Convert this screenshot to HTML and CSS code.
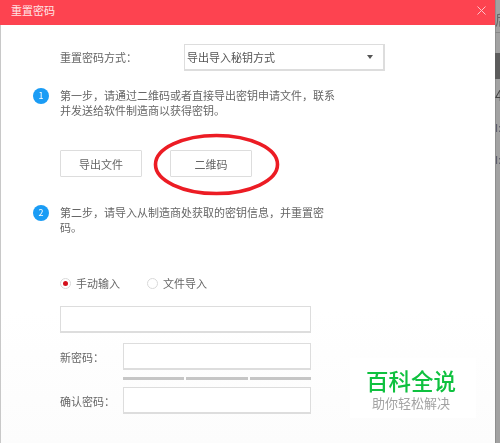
FILE: index.html
```html
<!DOCTYPE html>
<html lang="zh">
<head>
<meta charset="utf-8">
<title>重置密码</title>
<link rel="stylesheet" href="styles.css">
</head>
<body>
<div class="page">
  <main class="dialog">
    <header class="head">
      <span class="head-title">重置密码</span>
      <svg class="close" width="9" height="9" viewBox="0 0 9 9"><path d="M.5.5l8 8M8.5.5l-8 8" stroke="#fbc4c9" stroke-width="1" fill="none"/></svg>
    </header>
    <div class="body">
      <div class="method">
        <span class="method-label">重置密码方式：</span>
        <div class="select">
          <span>导出导入秘钥方式</span>
          <span class="caret"></span>
        </div>
      </div>
      <div class="step step-one">
        <span class="badge">1</span>
        <p class="step-text">第一步，请通过二维码或者直接导出密钥申请文件，联系并发送给软件制造商以获得密钥。</p>
      </div>
      <div class="buttons">
        <button class="btn">导出文件</button>
        <button class="btn">二维码</button>
      </div>
      <div class="step step-two">
        <span class="badge">2</span>
        <p class="step-text">第二步，请导入从制造商处获取的密钥信息，并重置密码。</p>
      </div>
      <div class="radios">
        <label class="radio"><span class="dot dot-on"></span>手动输入</label>
        <label class="radio"><span class="dot"></span>文件导入</label>
      </div>
      <div class="box box-full"></div>
      <div class="row row-new">
        <span class="row-label">新密码：</span>
        <div class="box box-field"></div>
      </div>
      <div class="meter"><i></i><i></i><i></i></div>
      <div class="row row-confirm">
        <span class="row-label">确认密码：</span>
        <div class="box box-field"></div>
      </div>
    </div>
  </main>
  <aside class="behind">
    <span class="behind-top">后</span>
    <span class="behind-dark"></span>
    <span class="behind-num">4</span>
    <span class="behind-id">I:</span>
    <span class="behind-id">I:</span>
  </aside>
</div>
<svg class="circle" width="133" height="69" viewBox="0 0 133 69"><ellipse cx="66.5" cy="34.5" rx="61" ry="29" fill="none" stroke="#ec1c24" stroke-width="3.6"/></svg>
<div class="mark">
  <div class="mark-name">百科全说</div>
  <div class="mark-sub">助你轻松解决</div>
</div>
</body>
</html>
```
FILE: styles.css
```css
* { box-sizing: border-box; }
html, body { margin: 0; padding: 0; }
body {
  width: 500px;
  height: 443px;
  overflow: hidden;
  position: relative;
  font-family: "Noto Sans CJK SC", "Noto Sans", sans-serif;
  font-size: 11px;
  color: #666;
  background: #fff;
}
.page { display: flex; height: 443px; filter: blur(.35px); }
.dialog {
  width: 495px;
  height: 443px;
  display: flex;
  flex-direction: column;
  background: linear-gradient(#fff 70%, #fcfcfc);
}
.head {
  height: 25px;
  flex: none;
  background: #fd4350;
  display: flex;
  align-items: center;
  justify-content: space-between;
  padding: 0 9px 5px 11px;
  color: #ffe4e6;
  font-size: 11px;
}
.close { display: block; }
.body {
  flex: 1;
  border-left: 1px solid #c8c8c8;
  padding: 19px 0 0 59px;
  display: flex;
  flex-direction: column;
  align-items: flex-start;
}
.method { display: flex; align-items: center; height: 27px; }
.method-label { width: 124px; margin-bottom: 2px; font-family: "Noto Sans CJK TC", "Noto Sans CJK SC", sans-serif; }
.select {
  width: 201px;
  height: 27px;
  border: 1px solid #ddd;
  border-width: 1px 2px 2px 1px;
  display: flex;
  align-items: center;
  justify-content: space-between;
  padding: 0 10px 1px 2px;
  color: #555;
}
.caret {
  width: 0;
  height: 0;
  border: 3px solid transparent;
  border-top: 4px solid #555;
  border-bottom: 0;
}
.step { position: relative; width: 276px; }
.step-one { margin-top: 17px; }
.step-two { margin-top: 28px; }
.step-text { margin: 0; line-height: 15px; letter-spacing: 0; }
.badge {
  position: absolute;
  left: -27px;
  top: 0;
  width: 16px;
  height: 16px;
  border-radius: 50%;
  background: #1a9cf5;
  color: #fff;
  font-size: 9px;
  line-height: 16px;
  text-align: center;
}
.buttons { display: flex; gap: 28px; margin-top: 32px; }
.btn {
  width: 82px;
  height: 27px;
  padding: 0;
  background: #fff;
  border: 1px solid #ddd;
  border-radius: 1px;
  font: inherit;
  color: #666;
}
.radios { display: flex; gap: 27px; margin-top: 40px; height: 16px; }
.radio { display: flex; align-items: center; gap: 5px; }
.dot {
  width: 11px;
  height: 11px;
  border: 1px solid #d8d8d8;
  border-radius: 50%;
  display: flex;
  align-items: center;
  justify-content: center;
}
.dot-on::after {
  content: "";
  width: 5px;
  height: 5px;
  border-radius: 50%;
  background: #d4101c;
}
.box { border: 1px solid #ddd; border-width: 1px 1px 2px 1px; height: 27px; background: #fff; }
.box-full { width: 251px; margin-top: 15px; }
.row { display: flex; align-items: center; }
.row-new { margin-top: 10px; }
.row-confirm { margin-top: 7px; }
.row-label { width: 63px; font-family: "Noto Sans CJK TC", "Noto Sans CJK SC", sans-serif; }
.box-field { width: 188px; }
.meter { display: flex; gap: 2px; width: 188px; margin: 7px 0 0 63px; }
.meter i { flex: 1; height: 3px; background: #c6c6c6; }
.behind {
  flex: 1;
  height: 443px;
  overflow: hidden;
  background: linear-gradient(90deg, #8e8e8e 1px, #a2a2a2 1px);
  display: flex;
  flex-direction: column;
  color: #444;
  font-size: 14px;
  line-height: 16px;
  white-space: nowrap;
}
.behind-top { height: 33px; padding-top: 11px; border-bottom: 1px solid #888; color: #666; }
.behind-dark { height: 26px; margin-top: 20px; background: #5c5c5c; flex: none; }
.behind-num { margin-top: 8px; height: 16px; flex: none; }
.behind-id { margin-top: 16px; height: 16px; flex: none; font-size: 11px; color: #556; }
.circle { position: absolute; left: 150px; top: 130px; filter: blur(.35px); }
.mark {
  position: absolute;
  left: 350px;
  top: 358px;
  width: 126px;
  height: 60px;
  background: #fff;
  display: flex;
  flex-direction: column;
  align-items: center;
  padding: 9px 4px 0 0;
  filter: blur(.3px);
}
.mark-name { font-size: 22.5px; line-height: 26px; color: #0fc13f; font-weight: 500; }
.mark-sub { font-size: 13px; line-height: 17px; margin-top: 1px; color: #a3a3a3; }
```
